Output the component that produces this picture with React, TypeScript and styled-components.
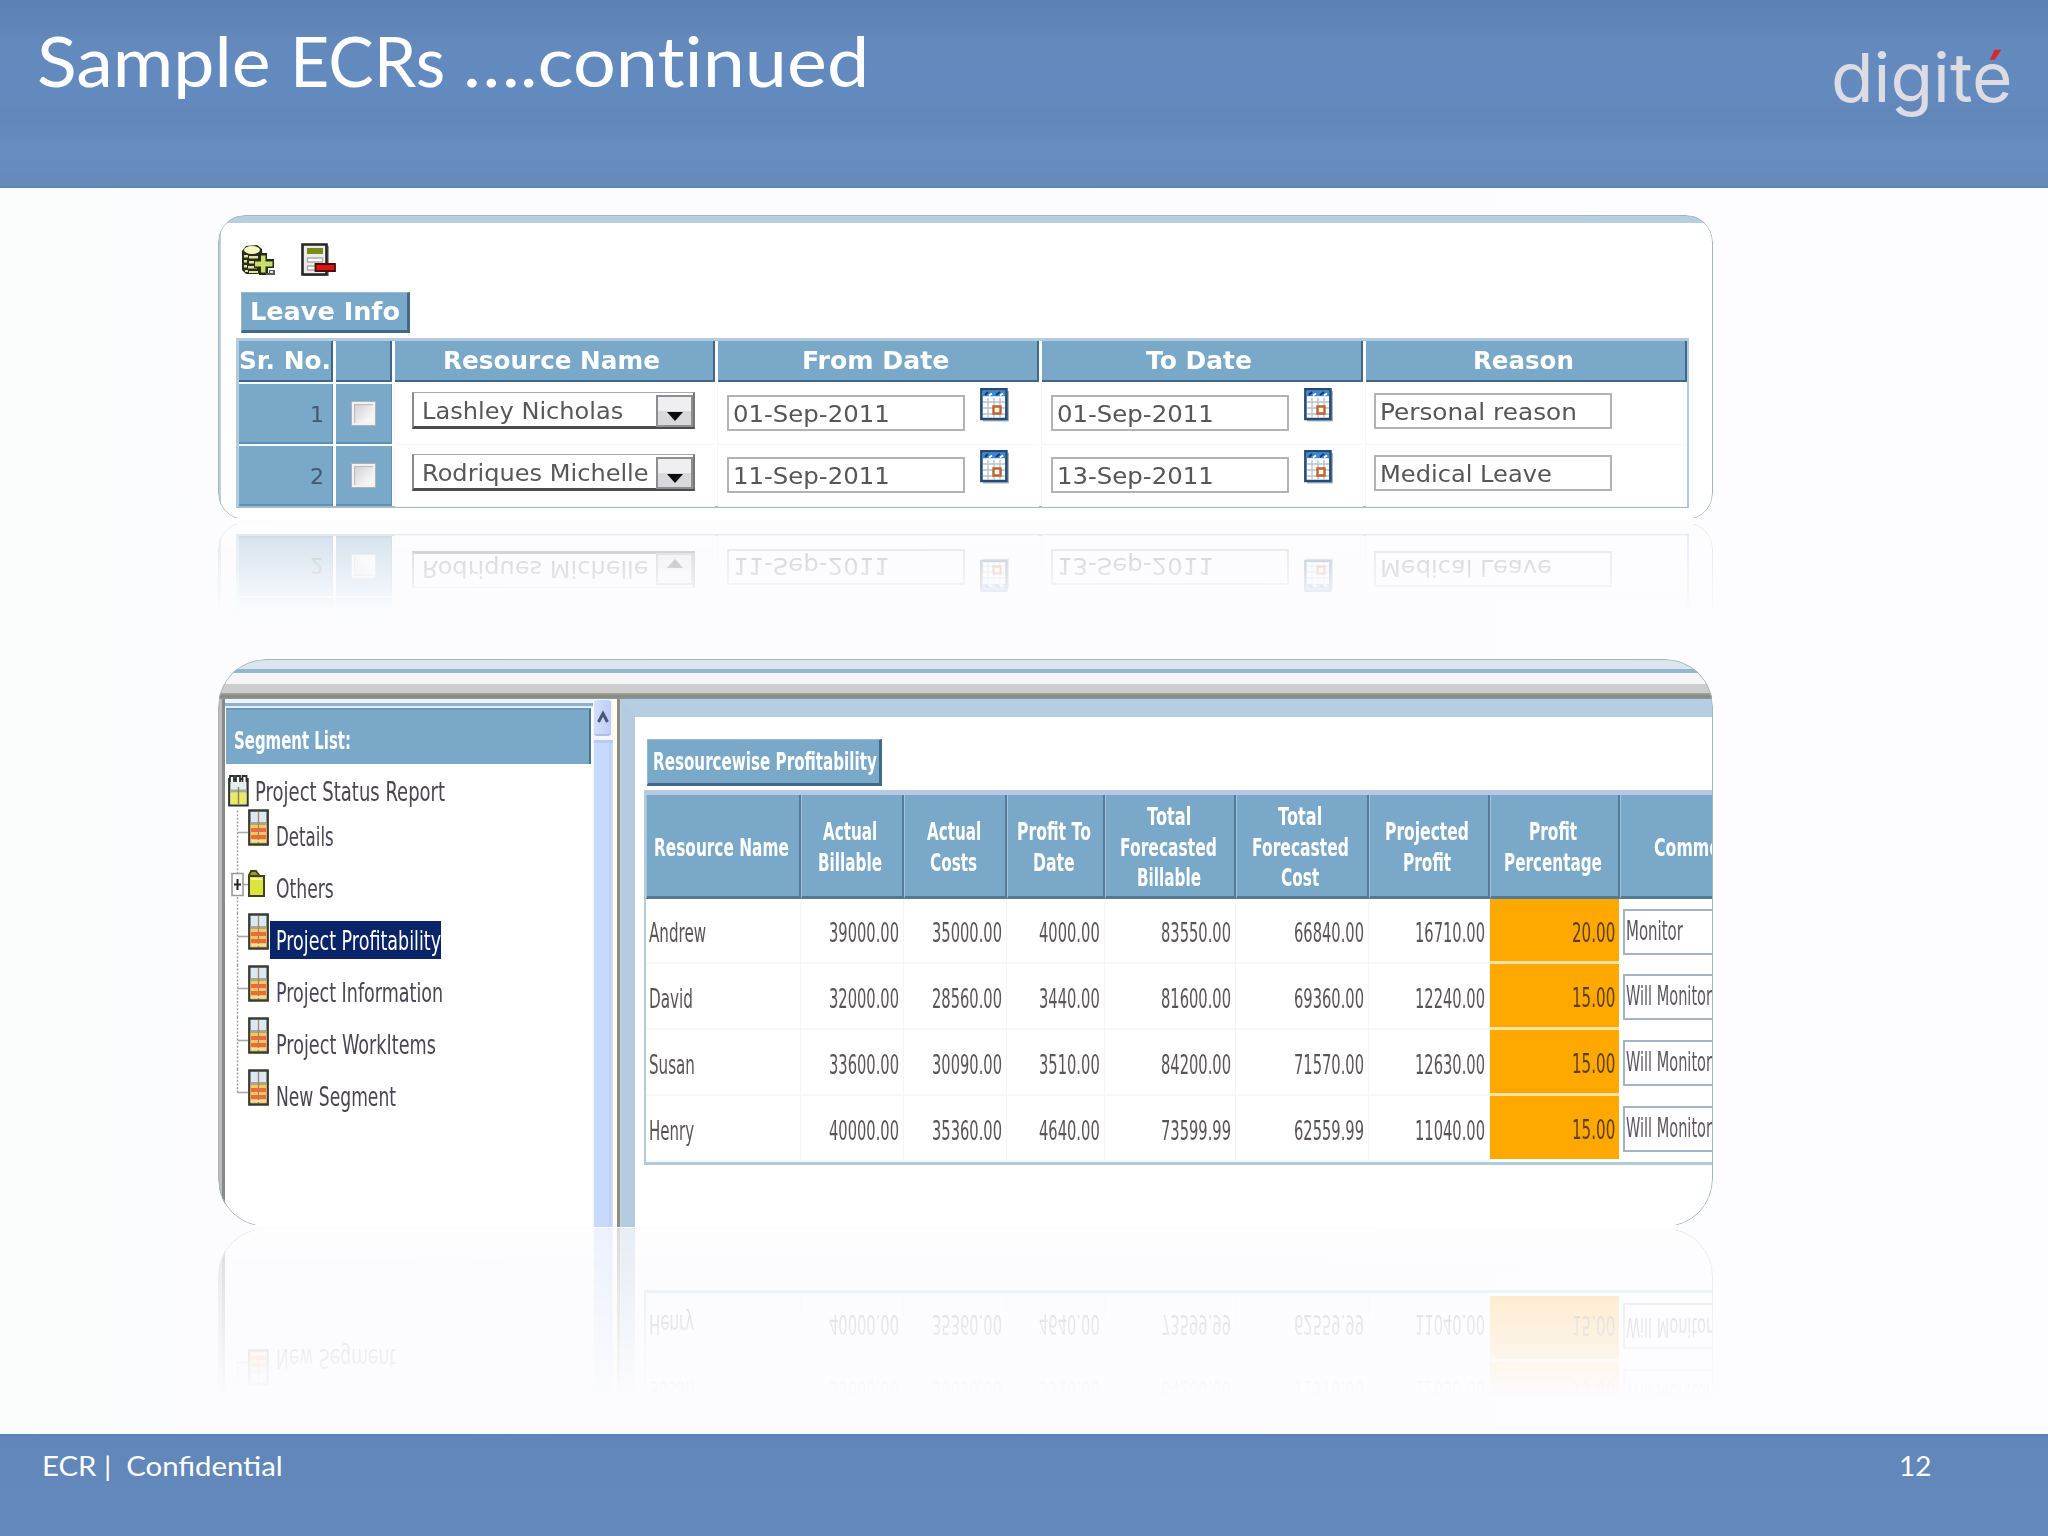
import React, { useLayoutEffect, useRef, useState } from "react";
import styled, { createGlobalStyle } from "styled-components";

const GlobalStyle = createGlobalStyle`
  *, *::before, *::after { box-sizing: border-box; }
  html, body { margin: 0; padding: 0; }
  body { background: #fcfdfd; }
`;

const uiFont = `"DejaVu Sans", Verdana, sans-serif`;
const titleFont = `Lato, Calibri, sans-serif`;
const blue = "#7aa8c8";

/* ---------- text set to an exact run width ---------- */

const FitBox = styled.span<{ $w: number }>`
  display: block;
  flex: none;
  width: ${(p) => p.$w}px;
  white-space: pre;
  text-align: left;
`;
const FitInner = styled.span`
  display: inline-block;
  transform-origin: 0 50%;
`;

function Fit({ w, children }: { w: number; children: React.ReactNode }) {
  const ref = useRef<HTMLSpanElement>(null);
  const [scale, setScale] = useState(1);
  useLayoutEffect(() => {
    if (ref.current) setScale(w / ref.current.offsetWidth);
  }, [w]);
  return (
    <FitBox $w={w}>
      <FitInner ref={ref} style={{ transform: `scaleX(${scale})` }}>
        {children}
      </FitInner>
    </FitBox>
  );
}

/* ---------- slide frame ---------- */

const Slide = styled.div`
  width: 2048px;
  height: 1536px;
  display: flex;
  flex-direction: column;
  overflow: hidden;
  background: linear-gradient(90deg, #fbfdfc 0, #fcfcfe 230px, #fdfcfe 100%);
`;
const Header = styled.header`
  flex: none;
  height: 188px;
  display: flex;
  justify-content: space-between;
  padding: 18px 35px 0 37px;
  background: linear-gradient(
    #5d81b3 0,
    #5f85b7 22px,
    #6389bd 45px,
    #638bc0 92px,
    #6286ba 108px,
    #6287bb 125px,
    #678cc0 145px,
    #668bba 185px,
    #5f85b8 188px
  );
`;
const Title = styled.h1`
  display: flex;
  margin: 0;
  font: 400 70px/84px ${titleFont};
  font-variant-ligatures: none;
  color: #fff;
`;
const Logo = styled.div`
  margin-top: 17px;
  font: 400 68px/84px Inter, sans-serif;
  color: #dcdce2;
`;
const RedAccent = styled.span`
  background: linear-gradient(#d8262c 0 27px, #dcdce2 27px);
  background-clip: text;
  -webkit-background-clip: text;
  -webkit-text-fill-color: transparent;
`;
const Main = styled.main`
  flex: 1;
  padding: 27px 0 0 218px;
`;
const Footer = styled.footer`
  position: relative;
  flex: none;
  height: 102px;
  display: flex;
  justify-content: space-between;
  padding: 14px 117px 0 42px;
  background: linear-gradient(#5b81b8 0, #6086ba 4px, #6388bb 50px, #658abf 80px, #6488bb 102px);
  color: #fff;
  font: 400 27px/36px ${titleFont};
`;

/* ---------- framed captures with mirror below ---------- */

const Capture = styled.section<{ $h: number; $r: number; $gap: number; $fade: string }>`
  position: relative;
  width: 1495px;
  height: ${(p) => p.$h}px;
  padding: 1px 1px 0 1px;
  border-radius: ${(p) => p.$r}px;
  overflow: hidden;
  background: #fefffe;
  font-family: ${uiFont};
  -webkit-box-reflect: below ${(p) => p.$gap}px ${(p) => p.$fade};

  /* hairline outline that stops before the straight bottom edge */
  &::after {
    content: "";
    position: absolute;
    inset: 0;
    border: 1px solid #a9b3ba;
    border-radius: inherit;
    mask-image: linear-gradient(#000 calc(100% - 2px), transparent calc(100% - 2px));
    pointer-events: none;
  }
`;
const LeaveCapture = styled(Capture)`
  margin-bottom: 139px;
`;
const LeaveBody = styled.div`
  height: 100%;
  border-top: 7px solid #b6cfe1;
  border-left: 2px solid #b9d0e0;
`;
const Toolbar = styled.div`
  display: flex;
  gap: 25px;
  padding: 20px 0 0 20px;
  height: 54px;
`;
const Tag = styled.div<{ $w: number; $h: number; $ml: number; $mt: number; $pl: number }>`
  width: ${(p) => p.$w}px;
  height: ${(p) => p.$h}px;
  margin: ${(p) => p.$mt}px 0 0 ${(p) => p.$ml}px;
  padding-left: ${(p) => p.$pl}px;
  padding-top: 1px;
  display: flex;
  align-items: center;
  background: ${blue};
  border: 1px solid #94bad3;
  border-right: 3px solid #426a88;
  border-bottom: 3px solid #426a88;
  color: #fff;
  font-weight: 700;
  font-size: 24px;
  line-height: 30px;
`;

const LeaveTable = styled.div`
  width: 1453px;
  margin: 5px 0 0 15px;
  display: grid;
  grid-template-columns: 94px 56px 320px 321px 321px 321px;
  grid-template-rows: 41px 60px 60px;
  gap: 2px 3px;
  border: 3px solid #b2cbdd;
  border-bottom: 2px solid #a6bccb;
  border-right-width: 2px;
`;
const LeaveHead = styled.div<{ $tight?: boolean }>`
  display: flex;
  align-items: center;
  justify-content: center;
  padding-right: ${(p) => (p.$tight ? 0 : 5)}px;
  background: ${blue};
  border-right: 2px solid #3f678a;
  border-bottom: 2px solid #3f678a;
  color: #fff;
  font-weight: 700;
  font-size: 24px;
  line-height: 30px;
`;
const BlueCell = styled.div<{ $end?: boolean }>`
  display: flex;
  justify-content: ${(p) => (p.$end ? "flex-end" : "center")};
  align-items: flex-start;
  padding: ${(p) => (p.$end ? "16px 8px 0 0" : "17px 0 0 0")};
  background: ${blue};
  border-right: 1px solid #5f8fb2;
  border-bottom: 2px solid #5f8fb2;
  color: #44566a;
  font-size: 22px;
  line-height: 30px;
`;
const Check = styled.span`
  width: 25px;
  height: 25px;
  border: 3px solid #f3f2ee;
  outline: 1px solid #a9b4ba;
  outline-offset: -1px;
  background: linear-gradient(135deg, #cfd0d1, #f6f6f6 80%);
  box-shadow: inset 1px 1px 1px #b8b8b8;
`;
const Plain = styled.div<{ $pt: number; $pl: number }>`
  display: flex;
  align-items: flex-start;
  padding: ${(p) => p.$pt}px 0 0 ${(p) => p.$pl}px;
  box-shadow: -1px 0 0 #f3f5f7, 0 1px 0 #f4f6f8;
`;
const SelectBox = styled.div`
  width: 283px;
  height: 37px;
  display: flex;
  align-items: center;
  padding: 3px 0 0 8px;
  justify-content: space-between;
  border: 1px solid #a8a8a8;
  border-left: 2px solid #8a8a8a;
  border-bottom: 3px solid #4c4c4c;
  border-right: 2px solid #777;
  background: #fff;
  color: #585858;
  font-size: 23px;
  line-height: 30px;
`;
const Arrow = styled.span`
  flex: none;
  width: 37px;
  height: 32px;
  margin-top: -1px;
  display: flex;
  justify-content: center;
  padding-top: 15px;
  border: 2px solid #8d8d92;
  background: linear-gradient(#efeff1 50%, #d9d9dc 50%);
`;
const Field = styled.div`
  width: 238px;
  height: 36px;
  display: flex;
  align-items: center;
  padding: 1px 0 0 4px;
  border: 2px solid #b3b3b3;
  background: #fff;
  color: #565656;
  font-size: 23px;
  line-height: 30px;
`;
const CalendarSlot = styled.span`
  margin: -7px 0 0 15px;
  line-height: 0;
`;

/* ---------- status report capture ---------- */

const Band = styled.div<{ $h: number; $c: string }>`
  height: ${(p) => p.$h}px;
  background: ${(p) => p.$c};
`;
const Split = styled.div`
  display: flex;
  height: 530px;
`;
const TreePane = styled.div`
  width: 374px;
  flex: none;
  border-left: 3px solid #bdbdbd;
  box-shadow: inset 3px 0 0 #898989;
  padding-left: 3px;
`;
const TreeHead = styled.div`
  height: 56px;
  margin: 0 2px 0 1px;
  padding: 16px 0 0 8px;
  background: ${blue};
  border-top: 2px solid #6a97b6;
  border-right: 2px solid #4a7292;
  color: #fff;
  font-weight: 700;
  font-size: 24px;
  line-height: 30px;
`;
const RootRow = styled.div`
  display: flex;
  align-items: flex-start;
  height: 45px;
  padding: 10px 0 0 3px;
  color: #4b4453;
  font-size: 27px;
  line-height: 34px;
`;
const RootLabel = styled.span`
  margin: 1px 0 0 6px;
`;
const TreeRow = styled.div`
  display: flex;
  align-items: flex-start;
  height: 52px;
  padding-left: 3px;
  color: #4b4453;
  font-size: 27px;
  line-height: 34px;
`;
const Gutter = styled.span`
  flex: none;
  width: 20px;
  line-height: 0;
`;
const IconSlot = styled.span<{ $mt?: number }>`
  flex: none;
  width: 22px;
  margin-top: ${(p) => p.$mt || 0}px;
  line-height: 0;
`;
const Label = styled.span<{ $on?: boolean }>`
  margin-top: 8px;
  height: 38px;
  padding: 3px 0 0 6px;
  color: ${(p) => (p.$on ? "#fff" : "inherit")};
  background: ${(p) => (p.$on ? "#0a246a" : "transparent")};
`;
const Scroll = styled.div`
  flex: none;
  width: 20px;
  display: flex;
  flex-direction: column;
  background: #f3f6fd;
`;
const ScrollButton = styled.div`
  height: 36px;
  margin: 1px 2px 4px 1px;
  display: flex;
  align-items: center;
  justify-content: center;
  border-radius: 3px;
  background: linear-gradient(90deg, #d3e0fb, #bccdf7);
  border-bottom: 2px solid #aebfe8;
`;
const ScrollThumb = styled.div`
  flex: 1;
  margin-left: 1px;
  border-top: 3px solid #b9cbf2;
  background: linear-gradient(90deg, #c8dafb 0 14px, #bccdf8 16px, #d9dff5 19px);
`;
const Divider = styled.div`
  flex: none;
  width: 8px;
  background: linear-gradient(90deg, #fffdf0 0 4px, #8c8c84 4px 7px, #c6d3dc 7px);
`;
const ReportPane = styled.div`
  flex: 1;
  min-width: 0;
  border-top: 18px solid #b5cee1;
  border-left: 14px solid #b5cbdf;
  background: #fefffe;
  overflow: hidden;
`;
const Report = styled.div`
  width: 1142px;
  margin: 4px 0 0 9px;
  display: grid;
  grid-template-columns: 154.5px 103.5px 103px 98px 131px 132.5px 121.5px 129.5px 166px;
  grid-template-rows: 104px 65px 66px 66px 66px;
  border: 2px solid #b3cbe0;
  border-top: 5px solid #b6c9e0;
  border-bottom: 3px solid #b3cadd;
`;
const ReportHead = styled.div`
  display: flex;
  flex-direction: column;
  align-items: center;
  justify-content: center;
  padding: 5px 3px 0 0;
  background: ${blue};
  border-left: 1px solid #a5c4da;
  border-right: 2px solid #527c9c;
  border-bottom: 3px solid #527996;
  color: #fff;
  font-weight: 700;
  font-size: 25px;
  line-height: 30.8px;
`;
const Cell = styled.div<{ $name?: boolean; $hot?: boolean; $last?: boolean }>`
  display: flex;
  align-items: center;
  justify-content: ${(p) => (p.$name ? "flex-start" : "flex-end")};
  padding: ${(p) => (p.$name ? "5px 0 0 3px" : "5px 4px 0 0")};
  border-right: 1px solid ${(p) => (p.$hot ? "#fff" : "#f3f5f8")};
  border-bottom: ${(p) => (p.$hot ? "3px solid #ffe2a6" : "2px solid #f5f7f9")};
  ${(p) => p.$last && "border-bottom-color: #fff;"}
  background: ${(p) => (p.$hot ? "#ffa800" : "transparent")};
  color: ${(p) => (p.$hot ? "#5c3f18" : "#5a5458")};
  font-size: 26px;
  line-height: 32px;
`;
const CommentCell = styled.div`
  padding: 10px 0 0 3px;
  color: #5e5562;
  font-size: 26px;
  line-height: 36px;
`;
const Comment = styled.div`
  height: 46px;
  padding: 2px 0 0 1px;
  border: 2px solid #a3b4c9;
  background: #fff;
`;

/* ---------- icons ---------- */

const AddRecordIcon = () => (
  <svg width="35" height="34" viewBox="0 0 35 34">
    <path d="M1 8 L5 3 L16 2 L21 6 L22 27 L17 31 L5 31 L1 27Z" fill="#2b2c1b" />
    <ellipse cx="11" cy="7" rx="8" ry="4" fill="#f4f7c0" />
    <path d="M3 12h4v2.500H3zM8 13h9v2.500H8zM3 17h3v2.500H3zM8 18h8v2.500H8zM3 22h3v2.500H3zM7 23h9v2.500H7zM4 27h3v2H4zM8 28h9v2H8z" fill="#dfe3a0" />
    <path d="M18 10h8v6h7v9h-6v7h-9v-7h-5v-9h5z" fill="#262a17" />
    <path d="M20 12.500h4.500v6h7v5h-7v6H20v-6h-6v-5h6z" fill="#c9de6a" />
    <path d="M28 27h6v5h-9v-2h3z" fill="#555a50" />
    <path d="M29 28h3v2h-3z" fill="#e4e6dc" />
  </svg>
);
const RemoveRecordIcon = () => (
  <svg width="35" height="34" viewBox="0 0 35 34">
    <path d="M3 3h25v30H3z" fill="#9a9a9a" />
    <path d="M1.5 1.5h24v30h-24z" fill="#ecece8" stroke="#252525" strokeWidth="2.6" />
    <path d="M6 5h16v6H6z" fill="#7b8a19" />
    <path d="M6.5 15h15v4h-15zM6.5 23h8v4h-8z" fill="#fff" stroke="#aaa" strokeWidth="1.3" />
    <path d="M14.500 21h19.500v7H14.500z" fill="#e11414" stroke="#4a0c0c" strokeWidth="1.8" />
  </svg>
);
const CalendarIcon = () => (
  <svg width="30" height="34" viewBox="0 0 30 34">
    <path d="M3 3h26v30.500H3z" fill="#a9b7c2" />
    <path d="M1.4 1.4h25v29.600h-25z" fill="#fff" stroke="#234b74" strokeWidth="2.6" />
    <path d="M2.7 2.7h22.400v5.500h-22.400z" fill="#3b86d8" />
    <path d="M5 7l3-3M16 7l4-3" stroke="#173c66" strokeWidth="2" />
    <path d="M9 7.500l3-2M20 7.500l3-2" stroke="#fff" strokeWidth="2" />
    <path d="M8 10v20M14 10v20M20 10v20M3 14h22M3 20h22M3 26h22" stroke="#b9c3cd" strokeWidth="1.4" />
    <path d="M13.500 18.500h7v7h-7z" fill="#fff" stroke="#c2622a" strokeWidth="2.4" />
  </svg>
);
const ArrowGlyph = () => (
  <svg width="16" height="9" viewBox="0 0 16 9">
    <path d="M0 0h16L8 9z" fill="#0b0b0b" />
  </svg>
);
const ChevronGlyph = () => (
  <svg width="12" height="14" viewBox="0 0 12 14">
    <path d="M1.5 12L6 3.5L10.500 12" fill="none" stroke="#48587c" strokeWidth="3" />
  </svg>
);
const ReportIcon = () => (
  <svg width="21" height="33" viewBox="0 0 21 33">
    <path d="M1.200 5h18.400v26.500H1.200z" fill="#e6ecf3" stroke="#30322c" strokeWidth="2.2" />
    <path d="M2.500 19h16v11h-16z" fill="#ece96a" />
    <path d="M2.500 15.500h16v3h-16z" fill="#a9a98c" />
    <path d="M10.500 13v17" stroke="#85864a" strokeWidth="1.4" />
    <path d="M2 8V2h4v6M8 8V2h4v6M14.500 8V2h4v6" fill="#fff" stroke="#30322c" strokeWidth="1.8" />
  </svg>
);
const SegmentIcon = () => (
  <svg width="21" height="37" viewBox="0 0 21 37">
    <path d="M1.300 1.500h18.400v34H1.300z" fill="#dbe8f6" stroke="#3a3c31" strokeWidth="2.4" />
    <path d="M2.500 13h16v3h-16z" fill="#a3a98a" />
    <path d="M2.500 16h16v18h-16z" fill="#fbc765" />
    <path d="M3 19h15v4H3zM3 26h15v4H3z" fill="#ee6a3a" />
    <path d="M10.500 3v31" stroke="#a4855c" strokeWidth="1.3" />
    <path d="M3 32h15" stroke="#f7e08d" strokeWidth="2" />
  </svg>
);
const FolderIcon = () => (
  <svg width="18" height="28" viewBox="0 0 18 28">
    <path d="M1 9V6l2-4h5l3 4v3" fill="#9a9d2d" stroke="#41431c" strokeWidth="1.8" />
    <path d="M1 7h15v20H1z" fill="#dbe33e" stroke="#41431c" strokeWidth="2" />
    <path d="M3 10h11" stroke="#f5f8a4" strokeWidth="2" />
  </svg>
);
const Branch = ({ first, last, plus }: { first?: boolean; last?: boolean; plus?: boolean }) => (
  <svg width="20" height="52" viewBox="0 0 20 52">
    <path
      d={`M9.500 ${first ? -2 : 0}V${last ? 24 : 52}`}
      stroke="#9b9b9b"
      strokeWidth="1.4"
      strokeDasharray="2 1.600"
    />
    <path d="M9.500 23.500H20" stroke="#a8a8a8" strokeWidth="1.600" />
    {plus && (
      <>
        <path d="M4 12.500h11v22H4z" fill="#fff" stroke="#9a9a9a" strokeWidth="1.6" />
        <path d="M6 23.500h7M9.500 18v11" stroke="#222" strokeWidth="2" />
      </>
    )}
  </svg>
);

/* ---------- data ---------- */

const leaveHeads: [string, number][] = [
  ["Sr. No.", 92],
  ["", 0],
  ["Resource Name", 217],
  ["From Date", 147],
  ["To Date", 106],
  ["Reason", 101],
];
const leaves = [
  { no: "1", name: "Lashley Nicholas", nameW: 201, from: "01-Sep-2011", to: "01-Sep-2011", reason: "Personal reason", reasonW: 197 },
  { no: "2", name: "Rodriques Michelle", nameW: 227, from: "11-Sep-2011", to: "13-Sep-2011", reason: "Medical Leave", reasonW: 172 },
];

const segments = [
  { text: "Details", w: 58 },
  { text: "Others", w: 58, folder: true },
  { text: "Project Profitability", w: 165, on: true },
  { text: "Project Information", w: 167 },
  { text: "Project WorkItems", w: 160 },
  { text: "New Segment", w: 120 },
];

const reportHeads: [string, number][][] = [
  [["Resource Name", 135]],
  [["Actual", 54], ["Billable", 64]],
  [["Actual", 54], ["Costs", 47]],
  [["Profit To", 74], ["Date", 42]],
  [["Total", 44], ["Forecasted", 97], ["Billable", 64]],
  [["Total", 44], ["Forecasted", 97], ["Cost", 38]],
  [["Projected", 84], ["Profit", 48]],
  [["Profit", 48], ["Percentage", 98]],
  [["Comments", 94]],
];
const people = [
  { name: "Andrew", w: 57, n: ["39000.00", "35000.00", "4000.00", "83550.00", "66840.00", "16710.00"], pct: "20.00", note: "Monitor", noteW: 57 },
  { name: "David", w: 44, n: ["32000.00", "28560.00", "3440.00", "81600.00", "69360.00", "12240.00"], pct: "15.00", note: "Will Monitor", noteW: 86 },
  { name: "Susan", w: 46, n: ["33600.00", "30090.00", "3510.00", "84200.00", "71570.00", "12630.00"], pct: "15.00", note: "Will Monitor", noteW: 86 },
  { name: "Henry", w: 45, n: ["40000.00", "35360.00", "4640.00", "73599.99", "62559.99", "11040.00"], pct: "15.00", note: "Will Monitor", noteW: 86 },
];

/* ---------- sections ---------- */

const LeaveInfo = () => (
  <LeaveCapture $h={305} $r={27} $gap={2} $fade="linear-gradient(transparent 70%, rgba(0,0,0,0.34))">
    <LeaveBody>
      <Toolbar>
        <AddRecordIcon />
        <RemoveRecordIcon />
      </Toolbar>
      <Tag $w={169} $h={41} $ml={20} $mt={15} $pl={8}>
        <Fit w={150}>Leave Info</Fit>
      </Tag>
      <LeaveTable>
        {leaveHeads.map(([text, w], i) => (
          <LeaveHead key={i} $tight={i === 0}>
            {text && <Fit w={w}>{text}</Fit>}
          </LeaveHead>
        ))}
        {leaves.map((r) => (
          <React.Fragment key={r.no}>
            <BlueCell $end>{r.no}</BlueCell>
            <BlueCell>
              <Check />
            </BlueCell>
            <Plain $pt={8} $pl={17}>
              <SelectBox>
                <Fit w={r.nameW}>{r.name}</Fit>
                <Arrow>
                  <ArrowGlyph />
                </Arrow>
              </SelectBox>
            </Plain>
            {[r.from, r.to].map((d, i) => (
              <Plain key={i} $pt={11} $pl={9}>
                <Field>
                  <Fit w={157}>{d}</Fit>
                </Field>
                <CalendarSlot>
                  <CalendarIcon />
                </CalendarSlot>
              </Plain>
            ))}
            <Plain $pt={9} $pl={8}>
              <Field>
                <Fit w={r.reasonW}>{r.reason}</Fit>
              </Field>
            </Plain>
          </React.Fragment>
        ))}
      </LeaveTable>
    </LeaveBody>
  </LeaveCapture>
);

const SegmentTree = () => (
  <TreePane>
    <Band $h={4} $c="#edf3f8" />
    <Band $h={3} $c="#8eb0cd" />
    <Band $h={2} $c="#e3edf4" />
    <TreeHead>
      <Fit w={117}>Segment List:</Fit>
    </TreeHead>
    <RootRow>
      <ReportIcon />
      <RootLabel>
        <Fit w={190}>Project Status Report</Fit>
      </RootLabel>
    </RootRow>
    {segments.map((s, i) => (
      <TreeRow key={s.text}>
        <Gutter>
          <Branch first={i === 0} last={i === segments.length - 1} plus={s.folder} />
        </Gutter>
        <IconSlot $mt={s.folder ? 8 : 0}>{s.folder ? <FolderIcon /> : <SegmentIcon />}</IconSlot>
        <Label $on={s.on}>
          <Fit w={s.w}>{s.text}</Fit>
        </Label>
      </TreeRow>
    ))}
  </TreePane>
);

const StatusReport = () => (
  <Capture $h={568} $r={48} $gap={1} $fade="linear-gradient(transparent 70%, rgba(0,0,0,0.3))">
    <Band $h={9} $c="#d9e6ee" />
    <Band $h={4} $c="#94b7cd" />
    <Band $h={11} $c="#f5f5f7" />
    <Band $h={9} $c="#cdcdce" />
    <Band $h={6} $c="linear-gradient(#a8a893, #85887f 50%, #8d979b)" />
    <Split>
      <SegmentTree />
      <Scroll>
        <ScrollButton>
          <ChevronGlyph />
        </ScrollButton>
        <ScrollThumb />
      </Scroll>
      <Divider />
      <ReportPane>
        <Tag $w={235} $h={47} $ml={12} $mt={22} $pl={5}>
          <Fit w={224}>Resourcewise Profitability</Fit>
        </Tag>
        <Report>
          {reportHeads.map((lines, i) => (
            <ReportHead key={i}>
              {lines.map(([text, w]) => (
                <Fit key={text} w={w}>
                  {text}
                </Fit>
              ))}
            </ReportHead>
          ))}
          {people.map((p, r) => (
            <React.Fragment key={p.name}>
              <Cell $name>
                <Fit w={p.w}>{p.name}</Fit>
              </Cell>
              {p.n.map((v, i) => (
                <Cell key={i}>
                  <Fit w={v.length === 7 ? 61 : 70}>{v}</Fit>
                </Cell>
              ))}
              <Cell $hot $last={r === people.length - 1}>
                <Fit w={43}>{p.pct}</Fit>
              </Cell>
              <CommentCell>
                <Comment>
                  <Fit w={p.noteW}>{p.note}</Fit>
                </Comment>
              </CommentCell>
            </React.Fragment>
          ))}
        </Report>
      </ReportPane>
    </Split>
  </Capture>
);

export default function App() {
  return (
    <>
      <GlobalStyle />
      <Slide>
        <Header>
          <Title>
            <Fit w={253}>{"Sample "}</Fit>
            <Fit w={173}>{"ECRs "}</Fit>
            <Fit w={406}>….continued</Fit>
          </Title>
          <Logo>
            <Fit w={182}>
              digit<RedAccent>é</RedAccent>
            </Fit>
          </Logo>
        </Header>
        <Main>
          <LeaveInfo />
          <StatusReport />
        </Main>
        <Footer>
          <Fit w={241}>{"ECR |  Confidential"}</Fit>
          <Fit w={32}>12</Fit>
        </Footer>
      </Slide>
    </>
  );
}
